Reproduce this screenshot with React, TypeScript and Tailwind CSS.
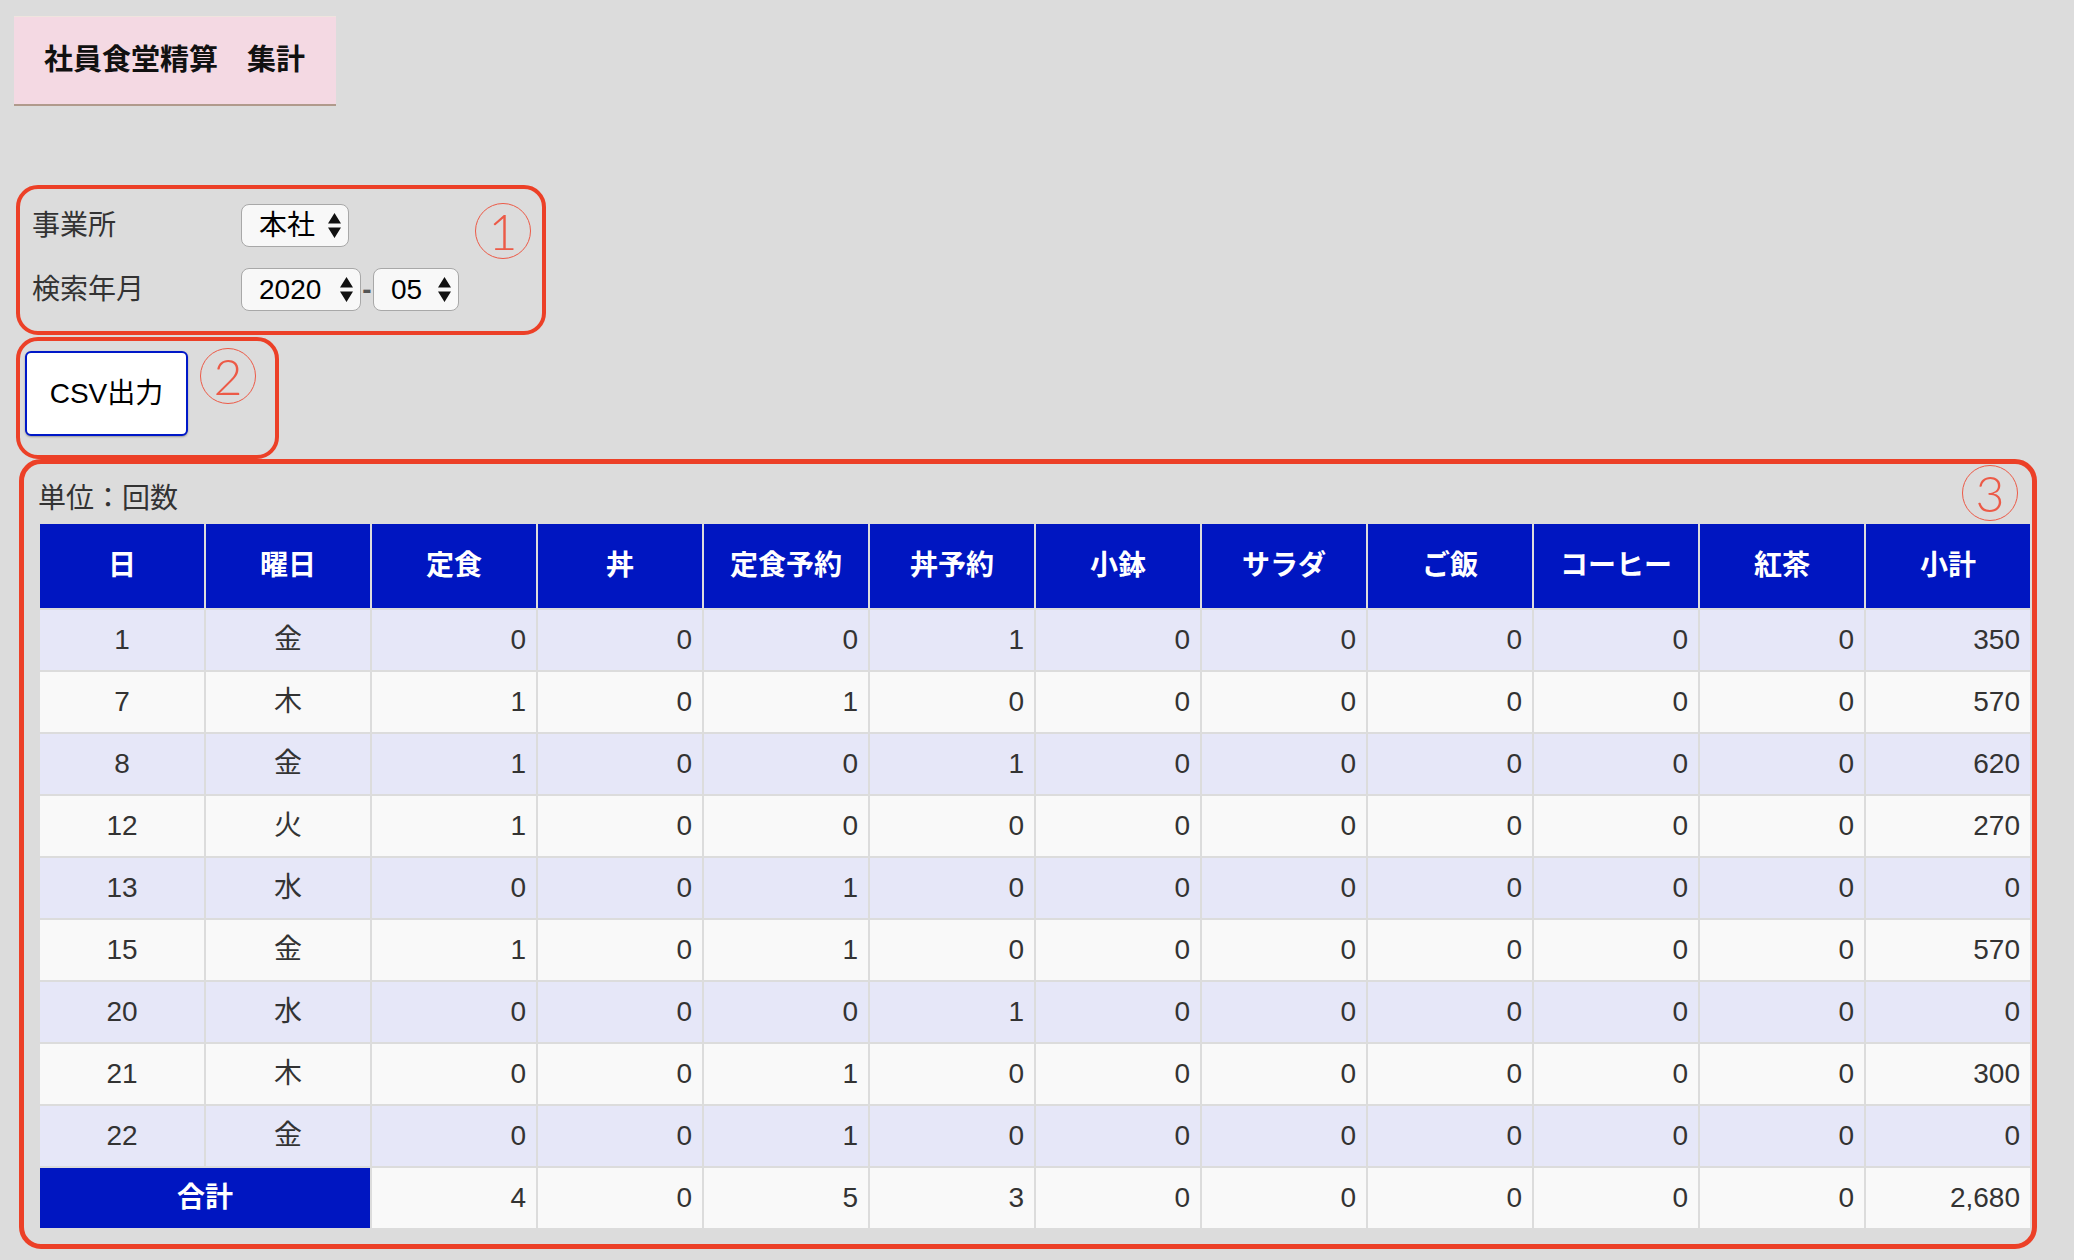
import React from "react";

type Row = (string | number)[];

const headers = ["日", "曜日", "定食", "丼", "定食予約", "丼予約", "小鉢", "サラダ", "ご飯", "コーヒー", "紅茶", "小計"];

const rows: Row[] = [
  ["1", "金", 0, 0, 0, 1, 0, 0, 0, 0, 0, "350"],
  ["7", "木", 1, 0, 1, 0, 0, 0, 0, 0, 0, "570"],
  ["8", "金", 1, 0, 0, 1, 0, 0, 0, 0, 0, "620"],
  ["12", "火", 1, 0, 0, 0, 0, 0, 0, 0, 0, "270"],
  ["13", "水", 0, 0, 1, 0, 0, 0, 0, 0, 0, "0"],
  ["15", "金", 1, 0, 1, 0, 0, 0, 0, 0, 0, "570"],
  ["20", "水", 0, 0, 0, 1, 0, 0, 0, 0, 0, "0"],
  ["21", "木", 0, 0, 1, 0, 0, 0, 0, 0, 0, "300"],
  ["22", "金", 0, 0, 1, 0, 0, 0, 0, 0, 0, "0"],
];

const totals: Row = [4, 0, 5, 3, 0, 0, 0, 0, 0, "2,680"];

function Arrows() {
  return (
    <svg width="13" height="25" viewBox="0 0 13 25" className="shrink-0">
      <path d="M6.5 0 L13 10.5 H0 Z M0 14.5 H13 L6.5 25 Z" fill="#111" />
    </svg>
  );
}

function FakeSelect({ value, className }: { value: string; className: string }) {
  return (
    <div
      className={`flex h-[43px] items-center justify-between rounded-[8px] border-[1.5px] border-[#a8a8a8] bg-[#f8f8f8] pl-[17px] pr-[7px] text-[28px] leading-none text-black ${className}`}
    >
      <span>{value}</span>
      <Arrows />
    </div>
  );
}

// annotation marks (①②③) drawn over the screenshot
function Circled({ n, className }: { n: string; className: string }) {
  return (
    <span
      className={`pointer-events-none absolute flex h-[56px] w-[56px] items-center justify-center rounded-full border-[1.5px] border-[#ec5a47] font-['Lato',sans-serif] text-[50px] font-light leading-none text-[#ec5a47] ${className}`}
    >
      {n}
    </span>
  );
}

export default function App() {
  return (
    <div className="min-h-screen bg-[#dcdcdc] pt-[16px] font-['Liberation_Sans','Noto_Sans_CJK_JP',sans-serif] text-[#333]">
      <div className="ml-[14px] flex h-[90px] w-[322px] items-center border-t border-b-2 border-t-[#efe4de] border-b-[#b09a8c] bg-[#f4d9e3] pl-[30px] text-[29px] font-bold text-[#111]">
        社員食堂精算　集計
      </div>

      {/* ① 検索条件 */}
      <div className="relative ml-[16px] mt-[79px] h-[150px] w-[530px] rounded-[22px] border-4 border-[#ec4027] pl-[12px] pt-[15px]">
        <div className="flex flex-col gap-[21px] text-[28px]">
          <div className="flex items-center">
            <span className="w-[209px]">事業所</span>
            <FakeSelect value="本社" className="w-[108px]" />
          </div>
          <div className="flex items-center">
            <span className="w-[209px]">検索年月</span>
            <FakeSelect value="2020" className="w-[120px]" />
            <span className="w-[12px] text-center font-bold text-[#555]">-</span>
            <FakeSelect value="05" className="w-[86px]" />
          </div>
        </div>
        <Circled n="1" className="left-[455px] top-[14px]" />
      </div>

      {/* ② CSV */}
      <div className="relative ml-[16px] mt-[2px] h-[122px] w-[263px] rounded-[22px] border-4 border-[#ec4027] pl-[5px] pt-[10px]">
        <button
          type="button"
          className="h-[85px] w-[163px] rounded-[6px] border-2 border-[#0018c8] bg-white text-[28px] text-black shadow-[0_1px_2px_rgba(0,0,0,0.3)]"
        >
          CSV出力
        </button>
        <Circled n="2" className="left-[180px] top-[7px]" />
      </div>

      {/* ③ 集計表 */}
      <div className="relative ml-[19px] h-[790px] w-[2018px] rounded-[22px] border-[5px] border-[#ec4027] pl-[14px] pt-[18px]">
        <div className="mb-[6px] text-[28px] leading-[34px]">単位：回数</div>
        <table className="w-[1994px] table-fixed border-separate border-spacing-[2px] text-[28px]">
          <thead>
            <tr>
              {headers.map((h) => (
                <th key={h} className="h-[84px] w-[164px] bg-[#0016c1] p-0 text-center font-bold text-white">
                  {h}
                </th>
              ))}
            </tr>
          </thead>
          <tbody>
            {rows.map((r, i) => (
              <tr key={i} className={i % 2 === 0 ? "bg-[#e6e7f8]" : "bg-[#f9f9f9]"}>
                {r.map((c, j) => (
                  <td key={j} className={`h-[60px] p-0 ${j < 2 ? "text-center" : "pr-[10px] text-right"}`}>
                    {c}
                  </td>
                ))}
              </tr>
            ))}
            <tr>
              <td colSpan={2} className="h-[60px] bg-[#0016c1] p-0 text-center font-bold text-white">
                合計
              </td>
              {totals.map((c, j) => (
                <td key={j} className="h-[60px] bg-[#f9f9f9] p-0 pr-[10px] text-right">
                  {c}
                </td>
              ))}
            </tr>
          </tbody>
        </table>
        <Circled n="3" className="right-[14px] top-[1px]" />
      </div>
    </div>
  );
}
